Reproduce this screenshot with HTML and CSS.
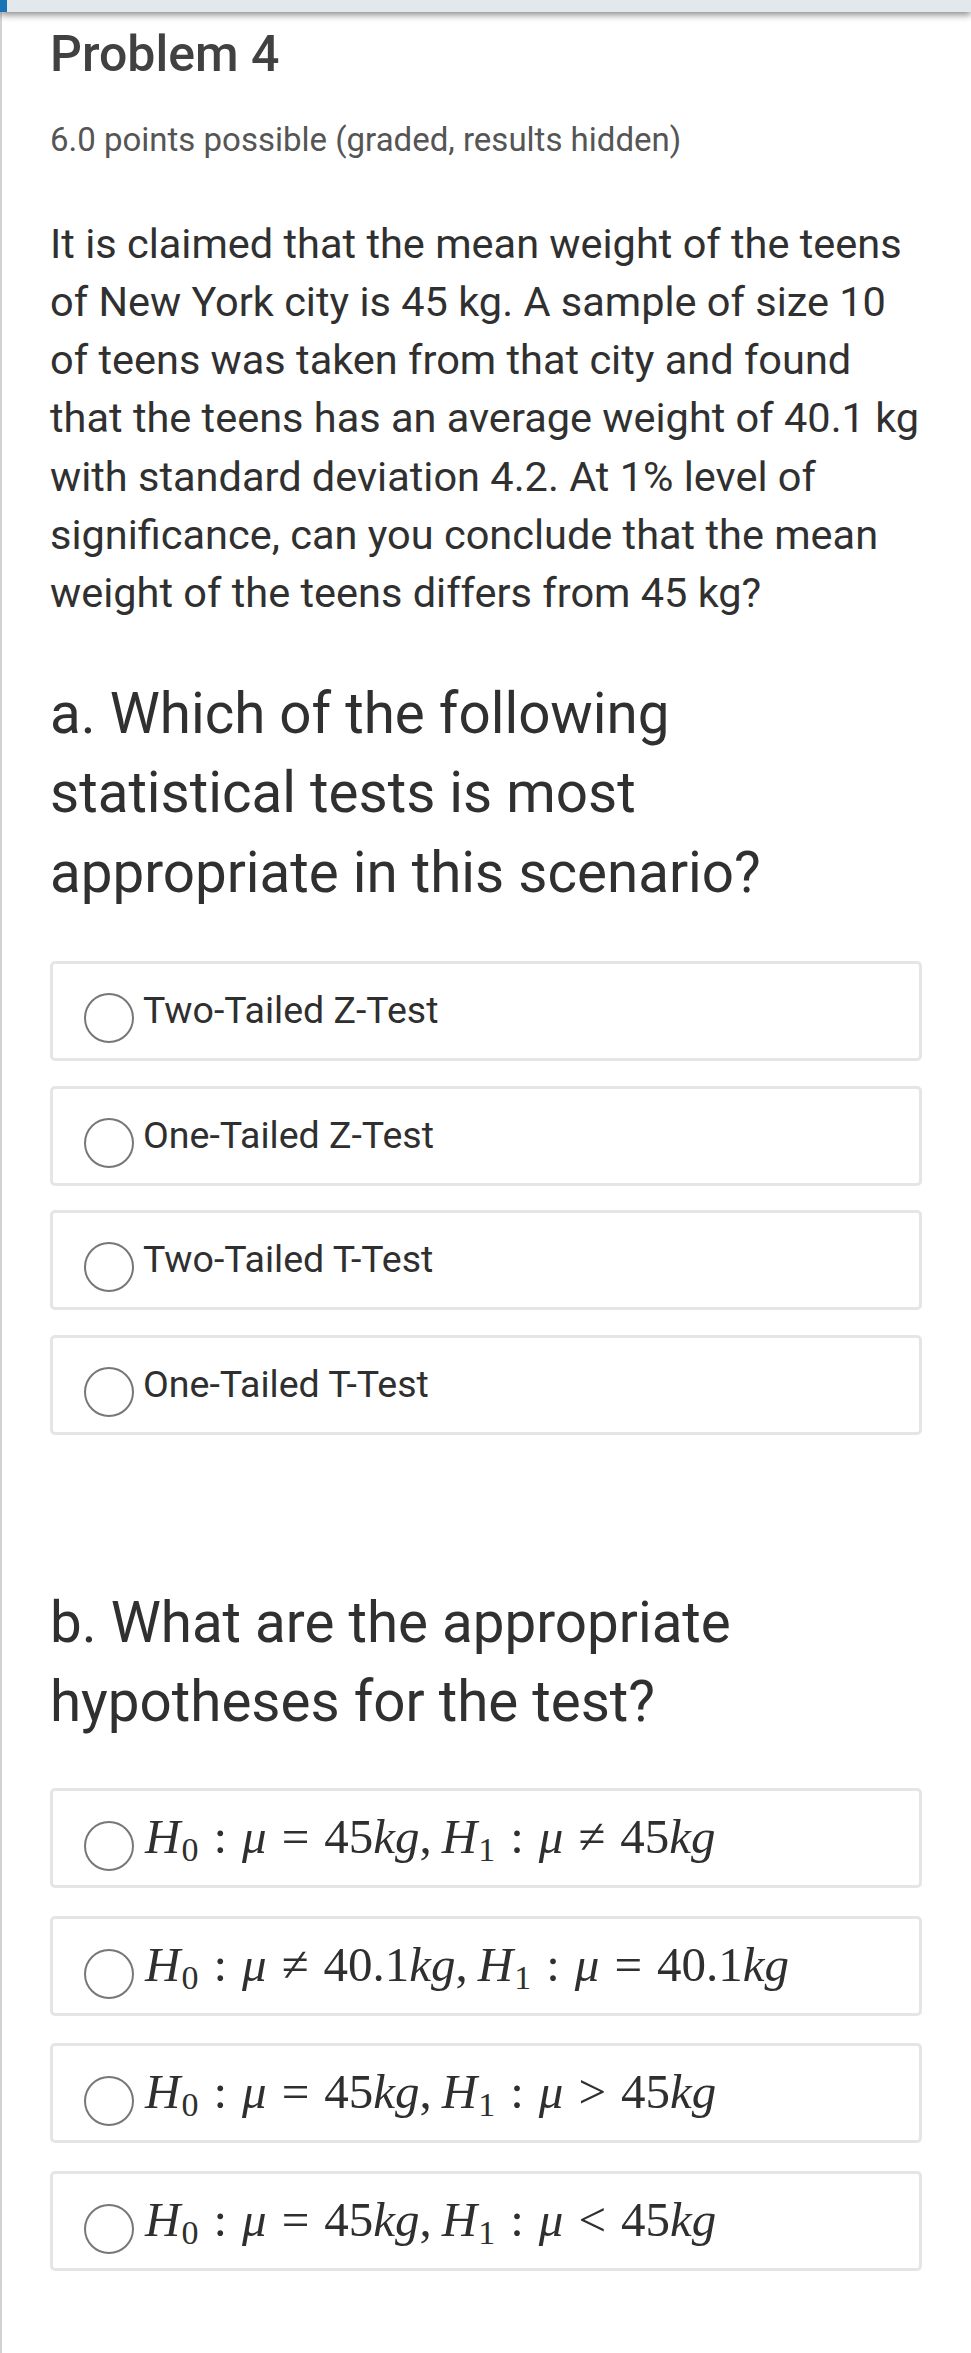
FILE: index.html
```html
<!DOCTYPE html>
<html lang="en">
<head>
<meta charset="utf-8">
<title>Problem 4</title>
<link rel="stylesheet" href="styles.css">
</head>
<body>
<div class="topbar"><div class="topbar-accent"></div></div>
<main class="page">
  <h1 class="title">Problem 4</h1>
  <div class="points">6.0 points possible (graded, results hidden)</div>
  <p class="prompt">It is claimed that the mean weight of the teens of New York city is 45 kg. A sample of size 10 of teens was taken from that city and found that the teens has an average weight of 40.1 kg with standard deviation 4.2. At 1% level of significance, can you conclude that the mean weight of the teens differs from 45 kg?</p>

  <h2 class="question">a. Which of the following statistical tests is most appropriate in this scenario?</h2>
  <div class="choices">
    <label class="choice"><span class="radio"></span><span class="choice-text">Two-Tailed Z-Test</span></label>
    <label class="choice"><span class="radio"></span><span class="choice-text">One-Tailed Z-Test</span></label>
    <label class="choice"><span class="radio"></span><span class="choice-text">Two-Tailed T-Test</span></label>
    <label class="choice"><span class="radio"></span><span class="choice-text">One-Tailed T-Test</span></label>
  </div>

  <h2 class="question question-b">b. What are the appropriate hypotheses for the test?</h2>
  <div class="choices choices-math">
    <label class="choice choice-math"><span class="radio"></span><span class="math"><i>H</i><sub>0</sub><span class="op">:</span><i>μ</i><span class="op">=</span>45<i>kg</i>,<i class="h1">H</i><sub>1</sub><span class="op">:</span><i>μ</i><span class="op">≠</span>45<i>kg</i></span></label>
    <label class="choice choice-math"><span class="radio"></span><span class="math"><i>H</i><sub>0</sub><span class="op">:</span><i>μ</i><span class="op">≠</span>40.1<i>kg</i>,<i class="h1">H</i><sub>1</sub><span class="op">:</span><i>μ</i><span class="op">=</span>40.1<i>kg</i></span></label>
    <label class="choice choice-math"><span class="radio"></span><span class="math"><i>H</i><sub>0</sub><span class="op">:</span><i>μ</i><span class="op">=</span>45<i>kg</i>,<i class="h1">H</i><sub>1</sub><span class="op">:</span><i>μ</i><span class="op">&gt;</span>45<i>kg</i></span></label>
    <label class="choice choice-math"><span class="radio"></span><span class="math"><i>H</i><sub>0</sub><span class="op">:</span><i>μ</i><span class="op">=</span>45<i>kg</i>,<i class="h1">H</i><sub>1</sub><span class="op">:</span><i>μ</i><span class="op">&lt;</span>45<i>kg</i></span></label>
  </div>
</main>
</body>
</html>
```

FILE: styles.css
```css
html, body {
  margin: 0;
  padding: 0;
  background: #ffffff;
}

body {
  font-family: Roboto, "Liberation Sans", Arial, sans-serif;
  color: #313131;
}

.topbar {
  position: relative;
  z-index: 1;
  height: 12px;
  background: #e2e8ec;
  box-shadow: 0 3px 7px rgba(0, 0, 0, 0.45);
}

.topbar-accent {
  width: 7px;
  height: 12px;
  background: #1a73b6;
}

.page {
  border-left: 2px solid #d2d2d2;
  min-height: 2341px;
  padding: 0 49px 0 48px;
  box-sizing: border-box;
  overflow: hidden;
}

.title {
  margin: 12px 0 0;
  font-size: 50px;
  line-height: 60px;
  font-weight: 500;
  color: #414141;
}

.points {
  margin-top: 36px;
  font-size: 33px;
  line-height: 40px;
  color: #555555;
}

.prompt {
  margin: 54.5px 0 0;
  font-size: 41.5px;
  line-height: 58.25px;
  color: #303030;
}

.question {
  margin: 52.25px 0 0;
  font-size: 56.5px;
  line-height: 79.5px;
  font-weight: 400;
  color: #303030;
}

.question-b {
  margin-top: 149px;
}

.choices {
  margin-top: 48px;
  display: flex;
  flex-direction: column;
  gap: 24.5px;
}

.choices-math {
  margin-top: 45.5px;
  gap: 27.5px;
}

.choice {
  display: flex;
  align-items: flex-start;
  height: 100px;
  box-sizing: border-box;
  border: 3px solid #e5e5e5;
  border-radius: 5px;
  padding-left: 31px;
  background: #ffffff;
}

.radio {
  flex: none;
  width: 50px;
  height: 50px;
  box-sizing: border-box;
  margin-top: 29px;
  border: 2px solid #777777;
  border-radius: 50%;
}

.choice-math .radio {
  margin-top: 30px;
}

.choice-text {
  margin: 24px 0 0 9px;
  font-size: 37.5px;
  line-height: 44px;
  color: #2f2f2f;
}

.math {
  margin: 21px 0 0 11px;
  font-family: "Liberation Serif", "Times New Roman", serif;
  font-size: 49px;
  line-height: 50px;
  color: #2f2f2f;
  white-space: nowrap;
}

.math i {
  font-style: italic;
}

.math sub {
  font-style: normal;
  font-size: 34px;
  vertical-align: -8px;
  line-height: 0;
  margin-left: 1px;
}

.math .op {
  padding: 0 15px;
}

.math .h1 {
  margin-left: 10px;
}
```
